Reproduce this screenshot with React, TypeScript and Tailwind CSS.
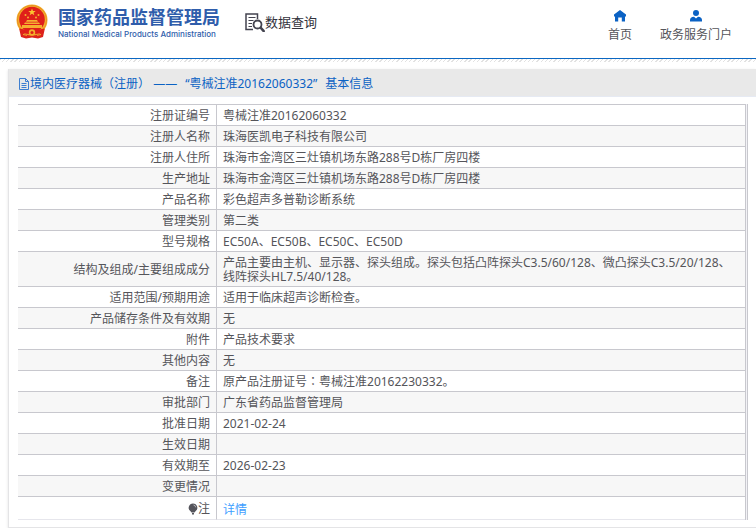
import React from "react";

// Centred full-width punctuation
const Punct = ({ children }: { children: React.ReactNode }) => (
    <span lang="zh-TW" className="font-['Noto_Sans_CJK_TC',sans-serif] leading-3">{children}</span>
);

const rows: { label: string; value: React.ReactNode }[] = [
    { label: "注册证编号", value: "粤械注准20162060332" },
    { label: "注册人名称", value: "珠海医凯电子科技有限公司" },
    { label: "注册人住所", value: "珠海市金湾区三灶镇机场东路288号D栋厂房四楼" },
    { label: "生产地址", value: "珠海市金湾区三灶镇机场东路288号D栋厂房四楼" },
    { label: "产品名称", value: "彩色超声多普勒诊断系统" },
    { label: "管理类别", value: "第二类" },
    { label: "型号规格", value: "EC50A、EC50B、EC50C、EC50D" },
    {
        label: "结构及组成/主要组成成分",
        value: "产品主要由主机、显示器、探头组成。探头包括凸阵探头C3.5/60/128、微凸探头C3.5/20/128、线阵探头HL7.5/40/128。",
    },
    { label: "适用范围/预期用途", value: "适用于临床超声诊断检查。" },
    { label: "产品储存条件及有效期", value: "无" },
    { label: "附件", value: "产品技术要求" },
    { label: "其他内容", value: "无" },
    { label: "备注", value: <>原产品注册证号<Punct>：</Punct>粤械注准20162230332。</> },
    { label: "审批部门", value: "广东省药品监督管理局" },
    { label: "批准日期", value: "2021-02-24" },
    { label: "生效日期", value: "" },
    { label: "有效期至", value: "2026-02-23" },
    { label: "变更情况", value: "" },
];

const Emblem = () => (
    <svg viewBox="0 0 32 36" className="h-9 w-8 shrink-0" aria-hidden="true">
        <path d="M3 24H29L27 33 22 34.500 16 33.500 10 34.500 5 33z" fill="#dc241b" />
        <circle cx="16" cy="16" r="15.500" fill="#f2b02c" />
        <circle cx="16" cy="16" r="14.600" fill="none" stroke="#e8861e" strokeWidth="0.8" />
        <circle cx="16" cy="15.500" r="12.800" fill="#df1f1a" />
        <path d="M16 4.600l1 2.500h2.700l-2.200 1.600.9 2.600-2.400-1.600-2.400 1.600.9-2.600-2.200-1.600H15z" fill="#fbc332" />
        <g fill="#f6b030">
            <circle cx="9.500" cy="11" r="1" />
            <circle cx="12" cy="13.500" r="1" />
            <circle cx="20" cy="13.500" r="1" />
            <circle cx="22.500" cy="11" r="1" />
            <path d="M11 16h10l1 1.700H10zM9 18.500h14l1 1.500H8z" />
            <path d="M6 21h20v3H6z" />
        </g>
        <path d="M3.500 24.500Q16 28 28.500 24.500L27 28.500Q16 32 5 28.500z" fill="#df1f1a" />
        <circle cx="16" cy="28.500" r="3.200" fill="#f2b02c" />
        <circle cx="16" cy="28.500" r="1.500" fill="#df1f1a" />
        <path d="M7 30.500l4 .8M25 30.500l-4 .8" stroke="#f2b02c" />
    </svg>
);

const SearchDoc = () => (
    <svg viewBox="0 0 20 20" className="h-5 w-5" fill="none" stroke="#43434f" aria-hidden="true">
        <path d="M8 17.500H1V2H12.500V7" strokeWidth="1.500" />
        <path d="M3.500 5.500H10.500M3.500 8.500H8.500M3.500 11.500H7M3.500 14.500H7" strokeWidth="1.200" />
        <circle cx="12.500" cy="12.500" r="4" strokeWidth="1.800" />
        <path d="M15.500 15.500L19.500 20" strokeWidth="2.600" />
    </svg>
);

const HomeIcon = () => (
    <svg viewBox="0 0 12 12" className="h-3 w-3" fill="#0b62c4" aria-hidden="true">
        <path d="M6 0L12 4.500V6.500H11V11.500H7.800V7.500H4.200V11.500H1V6.500H0V4.500z" />
    </svg>
);

const PersonIcon = () => (
    <svg viewBox="0 0 12 12" className="h-3 w-3" fill="#0b62c4" aria-hidden="true">
        <circle cx="6" cy="3" r="3" />
        <path d="M0 11.500V10Q0 7.200 4 6.800L6 8.500 8 6.800Q12 7.200 12 10V11.500z" />
    </svg>
);

const DocIcon = () => (
    <svg viewBox="0 0 11 12" className="h-3 w-[11px]" fill="none" stroke="#3f7fd0" aria-hidden="true">
        <path d="M.5 .5H6.500L9.500 3.500V11.500H.5zM6.500 .5V3.500H9.500M2.500 5.500H7.500M2.500 7.500H7.500M2.500 9.500H7.500" />
    </svg>
);

const BulbIcon = () => (
    <svg viewBox="0 0 10 12" className="h-3 w-2.5" fill="#55555c" aria-hidden="true">
        <path d="M5 .5a4.300 4.300 0 0 1 2.500 7.800L6.500 9.500H3.500L2.500 8.300A4.300 4.300 0 0 1 5 .5zM4 10h2v1.500h-2z" />
        <path d="M5.500 2q2 .3 2.200 2.300" fill="none" stroke="#c9c9cf" strokeWidth=".8" />
    </svg>
);

export default function App() {
    return (
        <div className="bg-white font-['Noto_Sans','Noto_Sans_CJK_SC',sans-serif] text-xs text-[#55555a]">
            {/* Header */}
            <header className="flex h-[59px] items-start justify-between border-b border-[#0b67c2] pr-6 pl-4">
                <div className="flex items-start">
                    <a href="#" className="flex gap-2.5 pt-1 text-[#2f5dab]">
                        <Emblem />
                        <span className="flex w-40 flex-col pt-px">
                            <span className="font-['Noto_Sans_CJK_SC',sans-serif] text-lg leading-[22px] font-bold whitespace-nowrap">国家药品监督管理局</span>
                            <span className="pt-px font-['Inter',sans-serif] text-[8px] leading-3 font-medium whitespace-nowrap">
                                National Medical Products Administration
                            </span>
                        </span>
                    </a>
                    <h1 className="ml-[27px] flex items-center pt-3 text-[13px] leading-5 font-normal text-[#33333c]">
                        <SearchDoc />
                        数据查询
                    </h1>
                </div>
                <nav className="flex gap-7 pt-2.5 leading-4">
                    <a href="#" className="flex flex-col items-center gap-[5px]">
                        <HomeIcon />
                        首页
                    </a>
                    <a href="#" className="flex flex-col items-center gap-[5px]">
                        <PersonIcon />
                        政务服务门户
                    </a>
                </nav>
            </header>
            <div className="h-[3px] bg-[repeating-linear-gradient(135deg,#e2e2e2_0px,#e2e2e2_1px,#ffffff_1px,#ffffff_3px)]" />

            {/* Detail card */}
            <main className="mt-[7px] ml-2 border-b border-l border-[#e4e4e6] shadow-sm">
                <h2 className="flex h-7 items-center border-b border-[#e6eaf3] bg-[#e9e9e9] pt-0.5 pl-2.5 text-[#0b62c4]">
                    <DocIcon />
                    <span className="flex gap-2">
                        <span>境内医疗器械<Punct>（</Punct>注册<Punct>）</Punct> ——</span>
                        <span>“粤械注准20162060332”</span>
                        <span>基本信息</span>
                    </span>
                </h2>
                <div className="mt-[7px] mr-2 mb-[7px] ml-[9px] border-r border-[#c8c8ce] bg-[#f2f2f6] pr-px">
                    <table className="w-full border-separate border-spacing-0 border-r border-[#c8c8ce] bg-white leading-[14px]">
                        <tbody>
                            {rows.map((row) => (
                                <tr key={row.label} className="even:bg-[#f7f7f7]">
                                    <th
                                        scope="row"
                                        className="w-[199px] border-t border-r border-[#c8c8ce] pt-1 pr-1.5 pb-0.5 text-right font-normal"
                                    >
                                        {row.label}
                                    </th>
                                    <td className="h-[21px] border-t border-[#c8c8ce] px-1.5 pt-1 pb-0.5">{row.value}</td>
                                </tr>
                            ))}
                            <tr>
                                <th
                                    scope="row"
                                    className="border-t border-r border-b border-[#c8c8ce] border-b-[#e6e6ec] pt-0.5 pr-1.5 font-normal"
                                >
                                    <span className="flex items-center justify-end">
                                        <BulbIcon />注
                                    </span>
                                </th>
                                <td className="h-6 border-t border-b border-[#c8c8ce] border-b-[#e6e6ec] px-1.5 pt-1">
                                    <a href="#" className="text-[#409eff]">详情</a>
                                </td>
                            </tr>
                        </tbody>
                    </table>
                </div>
            </main>
        </div>
    );
}
